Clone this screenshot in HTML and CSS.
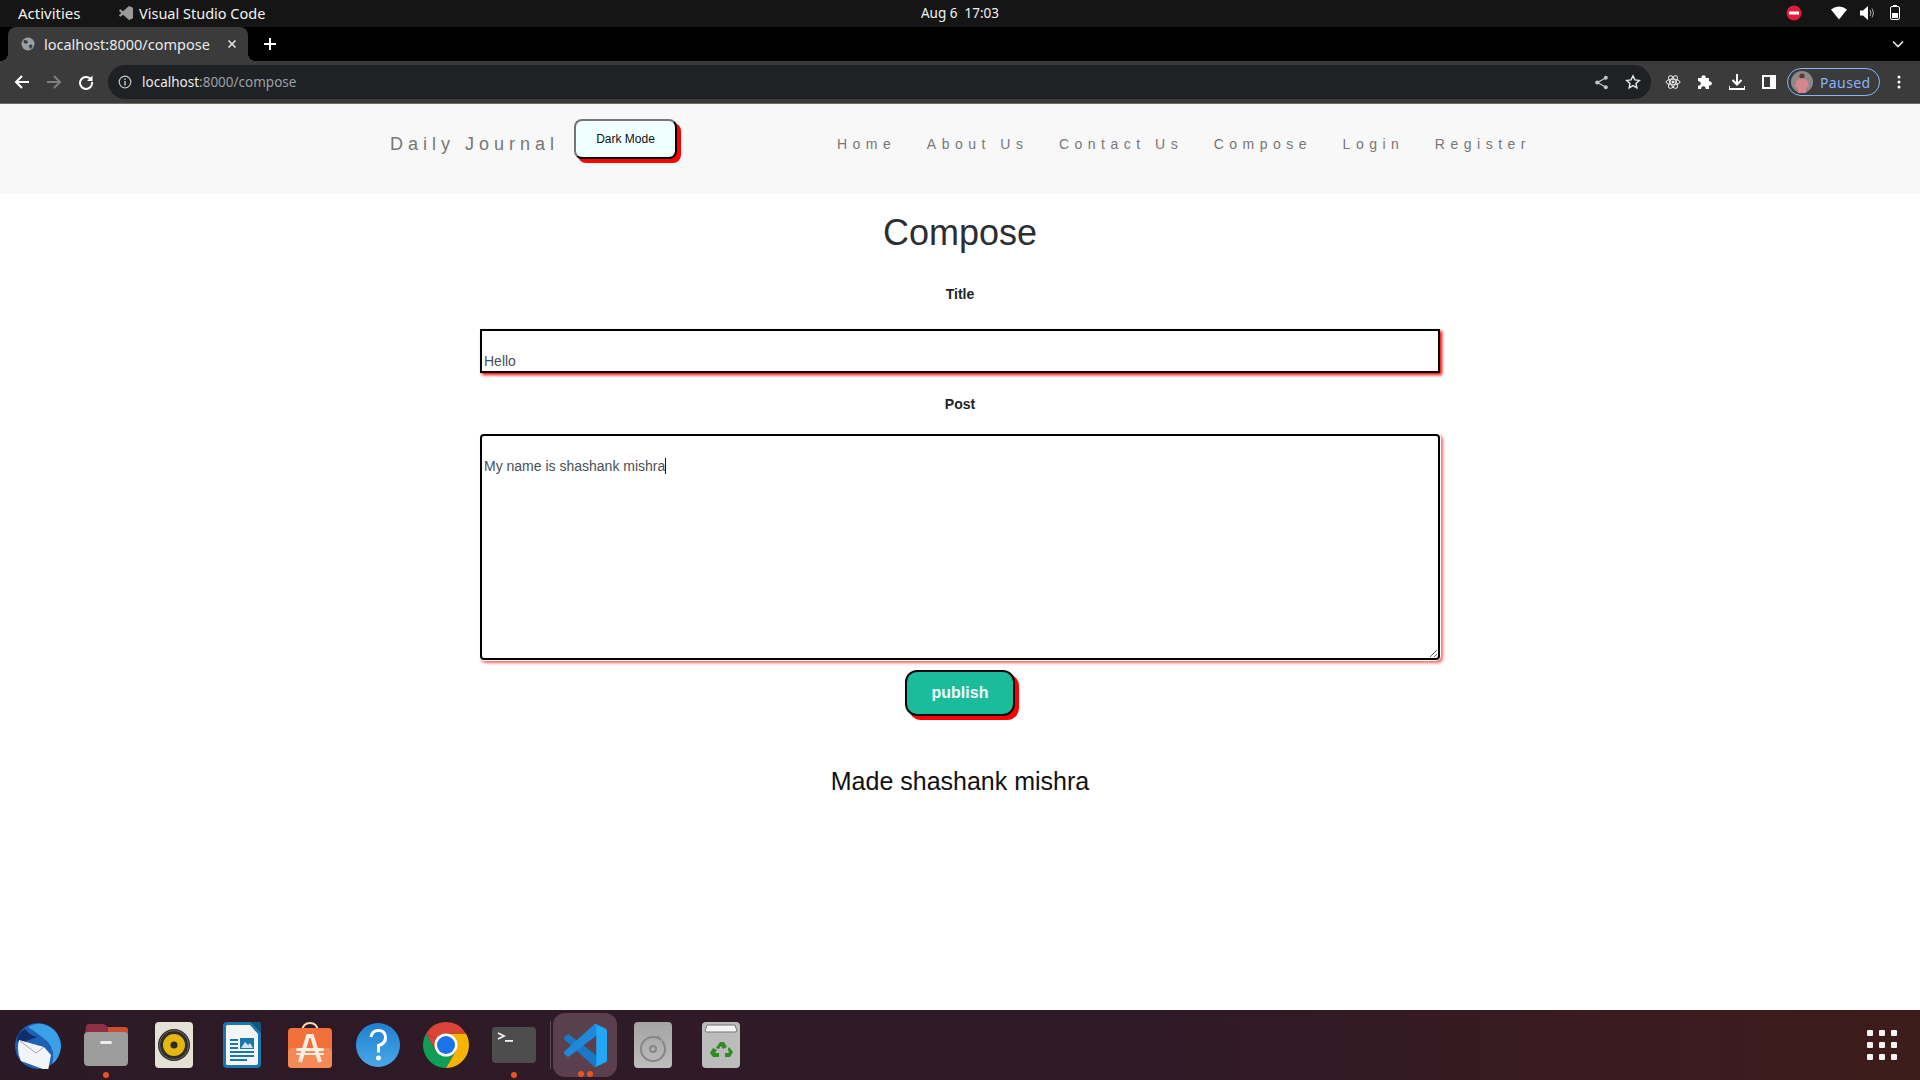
FILE: index.html
```html
<!DOCTYPE html>
<html lang="en">
<head>
  <meta charset="UTF-8" />
  <title>localhost:8000/compose</title>
  <link rel="stylesheet" href="styles.css">
</head>
<body>
<div class="desktop">

  <div class="topbar">
    <div class="top-left">
      <span class="activities">Activities</span>
      <span class="app-name">
        <svg width="14" height="14" viewBox="0 0 100 100"><path fill="#9a9a9a" d="M70.900 99.300a6.200 6.200 0 0 0 5-.2l20.600-9.900A6.250 6.250 0 0 0 100 83.600V16.400a6.250 6.250 0 0 0-3.500-5.600L75.900.9a6.230 6.230 0 0 0-7.100 1.200L29.350 38.100 12.100 25a4.170 4.170 0 0 0-5.320.24l-5.500 5a4.170 4.170 0 0 0 0 6.160L16.200 50 1.300 63.600a4.170 4.170 0 0 0 0 6.160l5.500 5a4.170 4.170 0 0 0 5.320.24L29.350 61.900l39.450 36a6.200 6.200 0 0 0 2.100 1.400zM75 27.300 45.100 50 75 72.700z"/></svg>
        Visual Studio Code
      </span>
    </div>
    <span class="clock">Aug 6&nbsp; 17:03</span>
    <div class="tray">
      <svg class="tray-dnd" width="16" height="16" viewBox="0 0 16 16"><circle cx="8" cy="8" r="7.500" fill="#e01b3c"/><rect x="3" y="6.500" width="10" height="3" fill="#fff"/></svg>
      <svg class="tray-wifi" width="16" height="14" viewBox="0 0 16 14"><path fill="#fff" d="M0 3.500Q8-2.500 16 3.500L8 13.500z"/></svg>
      <svg class="tray-sound" width="15" height="14" viewBox="0 0 15 14"><path fill="#fff" d="M0 4.500h3L8 0v14l-5-4.500H0z"/><path fill="none" stroke="#aaa" d="M10 4q2 3 0 6M12 2.500q3 4.500 0 9"/></svg>
      <svg class="tray-batt" width="10" height="15" viewBox="0 0 10 15"><rect x=".5" y="1.500" width="9" height="13" rx="1.500" fill="none" stroke="#fff"/><rect x="3" y="0" width="4" height="1.500" fill="#fff"/><rect x="2" y="8" width="6" height="5" fill="#fff"/></svg>
    </div>
  </div>

  <div class="tabstrip">
    <div class="tab">
      <svg width="14" height="14" viewBox="0 0 14 14"><circle cx="7" cy="7" r="6.500" fill="#9aa0a6"/><path fill="#3b3b3b" d="M3 3l3 .5 1 2-2 1.500-2.500-1.500zM8 8l3-.5.5 2-2 2.500-1-1z"/></svg>
      <span class="tab-title">localhost:8000/compose</span>
      <svg class="tab-close" width="10" height="10" viewBox="0 0 10 10"><path stroke="#e8eaed" stroke-width="1.500" d="M1.500 1.500l7 7M8.500 1.500l-7 7"/></svg>
    </div>
    <svg class="new-tab" width="14" height="14" viewBox="0 0 14 14"><path stroke="#fff" stroke-width="2" d="M7 1v12M1 7h12"/></svg>
    <svg class="tab-menu" width="12" height="8" viewBox="0 0 12 8"><path fill="none" stroke="#e8eaed" stroke-width="1.600" d="M1 1.500l5 5 5-5"/></svg>
  </div>

  <div class="toolbar">
    <div class="nav-btns">
      <svg width="16" height="16" viewBox="0 0 16 16"><path fill="none" stroke="#fff" stroke-width="2" d="M15 8H2M8 2L2 8l6 6"/></svg>
      <svg width="16" height="16" viewBox="0 0 16 16"><path fill="none" stroke="#7f7f7f" stroke-width="2" d="M1 8h13M8 2l6 6-6 6"/></svg>
      <svg width="16" height="16" viewBox="0 0 16 16"><path fill="none" stroke="#fff" stroke-width="2" d="M13 5.500A6 6 0 1 0 14 8"/><path fill="#fff" d="M14.500 1.500v5.500H9z"/></svg>
    </div>
    <div class="omnibox">
      <svg width="14" height="14" viewBox="0 0 14 14"><circle cx="7" cy="7" r="5.800" fill="none" stroke="#c4c7c9" stroke-width="1.200"/><rect x="6.300" y="6" width="1.400" height="4.500" fill="#c4c7c9"/><rect x="6.300" y="3.500" width="1.400" height="1.500" fill="#c4c7c9"/></svg>
      <span class="url"><b>localhost</b>:8000/compose</span>
      <span class="omni-right">
        <svg width="15" height="15" viewBox="0 0 15 15"><path fill="none" stroke="#c4c7c9" stroke-width="1.300" d="M11.500 3L3.500 7.500l8 4.500"/><circle cx="11.800" cy="2.800" r="2" fill="#c4c7c9"/><circle cx="3.200" cy="7.500" r="2" fill="#c4c7c9"/><circle cx="11.800" cy="12.200" r="2" fill="#c4c7c9"/></svg>
        <svg width="16" height="16" viewBox="0 0 16 16"><path fill="none" stroke="#e8eaed" stroke-width="1.400" d="M8 1.800l1.900 4.100 4.400.5-3.300 3 .9 4.400L8 11.600l-3.900 2.200.9-4.400-3.300-3 4.400-.5z"/></svg>
      </span>
    </div>
    <div class="tool-icons">
      <svg width="16" height="16" viewBox="0 0 16 16"><g fill="none" stroke="#e8eaed" stroke-width="1"><ellipse cx="8" cy="8" rx="7" ry="2.800"/><ellipse cx="8" cy="8" rx="7" ry="2.800" transform="rotate(60 8 8)"/><ellipse cx="8" cy="8" rx="7" ry="2.800" transform="rotate(120 8 8)"/></g><circle cx="8" cy="8" r="1.500" fill="#e8eaed"/></svg>
      <svg width="16" height="16" viewBox="0 0 16 16"><path fill="#fff" d="M1 4h3.500a2.200 2.200 0 1 1 4.200 0H12v3.300a2.200 2.200 0 1 1 0 4.200V15H8.500a2.200 2.200 0 1 0-4.200 0H1v-3.500a2.200 2.200 0 1 0 0-4.200z"/></svg>
      <svg width="16" height="16" viewBox="0 0 16 16"><path fill="none" stroke="#fff" stroke-width="2" d="M8 0v10M3.500 6L8 10.500 12.500 6M0 12v3h16v-3"/></svg>
      <svg class="side-panel" width="14" height="14" viewBox="0 0 14 14"><rect x="1" y="1" width="12" height="12" fill="none" stroke="#fff" stroke-width="2"/><rect x="8" y="1" width="5" height="12" fill="#fff"/></svg>
    </div>
    <div class="profile">
      <svg width="22" height="22" viewBox="0 0 22 22"><circle cx="11" cy="11" r="11" fill="#8d8986"/><circle cx="11" cy="5" r="2.600" fill="#5b3a36"/><path fill="#d9858c" d="M6 9l5-2 5 2 2 7-3 1v5H7v-5l-3-1z"/></svg>
      <span>Paused</span>
    </div>
    <svg class="kebab" width="4" height="14" viewBox="0 0 4 14"><circle cx="2" cy="2" r="1.500" fill="#fff"/><circle cx="2" cy="7" r="1.500" fill="#fff"/><circle cx="2" cy="12" r="1.500" fill="#fff"/></svg>
  </div>

  <div class="page">
    <nav class="navbar">
      <div class="nav-inner">
        <div class="brand-wrap">
          <a class="brand">Daily Journal</a>
          <button class="dark-btn">Dark Mode</button>
        </div>
        <ul class="nav-links">
          <li>Home</li>
          <li>About Us</li>
          <li>Contact Us</li>
          <li>Compose</li>
          <li>Login</li>
          <li>Register</li>
        </ul>
      </div>
    </nav>

    <main class="compose">
      <h1>Compose</h1>
      <label class="field-label" for="title">Title</label>
      <input class="title-input" id="title" type="text" value="Hello" />
      <label class="field-label post-label" for="post">Post</label>
      <div class="post-wrap">
        <textarea class="post-input" id="post">My name is shashank mishra</textarea>
        <span class="caret"></span>
      </div>
      <button class="publish">publish</button>
    </main>

    <footer class="made">Made shashank mishra</footer>
  </div>

  <div class="dock">
    <div class="dock-item">
      <svg width="48" height="48" viewBox="0 0 48 48"><circle cx="24" cy="25" r="23" fill="#1f5fb4"/><path fill="#3aa0e8" d="M14 6q10-6 20-1 12 6 13 20-1 12-9 18 4-12-4-22-8-7-20-15z"/><path fill="#0c2f6b" d="M3 20q0-8 8-12 4 6 12 8l-16 6zM10 40q14 8 26 4-14-2-26-4z"/><path fill="#f2f4f8" d="M5 19l25 7 7 8-3 16L7 40q-5-10-2-21z"/><path fill="none" stroke="#9aa6b8" d="M6 20l16 12 8-6"/></svg>
    </div>
    <div class="dock-item running">
      <svg width="46" height="44" viewBox="0 0 46 44"><path fill="#8f2f47" d="M3 4q0-3 3-3h15l4 3h17q3 0 3 3v12H1z"/><path fill="#d9562c" d="M25 4h17q3 0 3 3v10H25z" opacity=".8"/><rect x="1" y="9" width="44" height="34" rx="4" fill="#9c9c9c"/><rect x="17" y="18" width="12" height="3" rx="1.500" fill="#eee"/></svg>
    </div>
    <div class="dock-item">
      <svg width="38" height="46" viewBox="0 0 38 46"><rect width="38" height="46" rx="4" fill="#e6e1d6"/><circle cx="19" cy="23" r="16" fill="#2e2c29"/><circle cx="19" cy="23" r="14.500" fill="none" stroke="#6b6863"/><circle cx="19" cy="23" r="11" fill="#e5b60f"/><circle cx="19" cy="23" r="3.500" fill="#2b2a27"/></svg>
    </div>
    <div class="dock-item">
      <svg width="38" height="46" viewBox="0 0 38 46"><path fill="#1a77ab" d="M4 0h24l10 10v32q0 4-4 4H4q-4 0-4-4V4q0-4 4-4z"/><path fill="#f5f5f5" d="M4 3h23l8 9v29q0 2-2 2H4q-1 0-1-2V4z"/><path fill="#14567e" d="M28 0h8q2 0 2 2v9z"/><g fill="#1a77ab"><rect x="7" y="17" width="8" height="2"/><rect x="7" y="21" width="8" height="2"/><rect x="7" y="25" width="8" height="2"/><rect x="7" y="29" width="24" height="2"/><rect x="7" y="33" width="24" height="2"/><rect x="7" y="37" width="17" height="2"/><rect x="17" y="16" width="14" height="11"/></g><path fill="#cfe4f2" d="M18 26l4-6 3 3 2-2 3 5z"/></svg>
    </div>
    <div class="dock-item">
      <svg width="46" height="46" viewBox="0 0 46 46"><path fill="none" stroke="#f5d9b5" stroke-width="2" d="M15 9q1-8 8-8t8 8"/><rect y="6" width="44" height="40" x="1" rx="4" fill="#f2703a"/><rect y="26" width="44" height="20" x="1" rx="4" fill="#f58a55"/><path fill="none" stroke="#fbeee6" stroke-width="4" d="M13 40l8-26h4l8 26"/><rect x="9" y="26" width="28" height="3" rx="1.500" fill="#fbeee6"/><rect x="9" y="31" width="28" height="2" rx="1" fill="#fbeee6"/></svg>
    </div>
    <div class="dock-item">
      <svg width="46" height="46" viewBox="0 0 46 46"><defs><linearGradient id="helpbg" x1="0" y1="0" x2="0" y2="1"><stop offset="0" stop-color="#1d80d0"/><stop offset="1" stop-color="#4aa8e8"/></linearGradient></defs><circle cx="23" cy="23" r="22" fill="url(#helpbg)"/><path fill="none" stroke="#fff" stroke-width="3" d="M16 15q1-6.500 7.500-6.500t7 6.500-7 8.500v7"/><circle cx="23.500" cy="36" r="2.500" fill="#fff"/></svg>
    </div>
    <div class="dock-item">
      <svg width="48" height="48" viewBox="0 0 48 48"><path fill="#0f9d58" d="M4.100 12.500A23 23 0 0 0 24 47l10-17.300-20 .3z"/><path fill="#f4b400" d="M43.900 12.500A23 23 0 0 1 24 47l10-17.300V18l-10-5.500z"/><path fill="#db4437" d="M24 1a23 23 0 0 1 19.900 11.500H24L14 18l-9.900-5.500A23 23 0 0 1 24 1z"/><path fill="#db4437" d="M4.100 12.500L14 30l6-4-6-8z"/><circle cx="24" cy="24" r="11.500" fill="#fff"/><circle cx="24" cy="24" r="9" fill="#1a73e8"/></svg>
    </div>
    <div class="dock-item running">
      <svg width="44" height="36" viewBox="0 0 44 36"><rect width="44" height="36" rx="4" fill="#4d4d4d"/><path fill="none" stroke="#f0f0f0" stroke-width="1.800" d="M6 6l6 3-6 3"/><rect x="13" y="13" width="8" height="1.800" fill="#f0f0f0"/></svg>
    </div>
    <span class="dock-sep"></span>
    <div class="dock-item active">
      <svg width="43" height="43" viewBox="0 0 100 100"><path fill="#1a78c8" d="M96.460 89.200 75.860 99.100a6.230 6.230 0 0 1-7.100-1.200L1.300 36.400a4.170 4.170 0 0 1 0-6.160l5.500-5a4.170 4.170 0 0 1 5.320-.24l81.200 61.600a4.140 4.140 0 0 0 6.670-3.300v.7a6.250 6.250 0 0 1-3.540 5.600z"/><path fill="#1e88dc" d="M96.460 10.800 75.860.9a6.230 6.230 0 0 0-7.100 1.200L1.300 63.600a4.170 4.170 0 0 0 0 6.160l5.500 5a4.170 4.170 0 0 0 5.320.24l81.200-61.600a4.140 4.140 0 0 1 6.670 3.300v-.7a6.250 6.250 0 0 0-3.540-5.600z"/><path fill="#22a6f8" d="M75.860 99.100a6.200 6.200 0 0 1-7.100-1.200c2.300 2.300 6.240.67 6.240-2.600V4.700c0-3.270-3.940-4.900-6.240-2.600a6.200 6.200 0 0 1 7.100-1.200l20.600 9.900A6.250 6.250 0 0 1 100 16.400v67.200a6.250 6.250 0 0 1-3.540 5.600z"/></svg>
    </div>
    <div class="dock-item">
      <svg width="38" height="46" viewBox="0 0 38 46"><defs><linearGradient id="discbg" x1="0" y1="0" x2="0" y2="1"><stop offset="0" stop-color="#a4a4a4"/><stop offset="1" stop-color="#bdbdbd"/></linearGradient></defs><rect width="38" height="46" rx="4" fill="url(#discbg)"/><circle cx="19" cy="27" r="12" fill="none" stroke="#868686" stroke-width="2"/><circle cx="19" cy="27" r="3" fill="none" stroke="#868686" stroke-width="2"/><path fill="#a8a8a8" d="M21 13h7v8z"/><path fill="none" stroke="#868686" stroke-width="2" d="M23 14l4 4"/></svg>
    </div>
    <div class="dock-item">
      <svg width="38" height="46" viewBox="0 0 38 46"><rect width="38" height="46" rx="4" fill="#bcbcbc"/><path fill="#f4f4f4" stroke="#777" d="M5 3h28l2 6-2 1H4l-1-1z"/><g fill="#2f8b22"><path d="M14 26l4-6h4l3 5-4 2-2-3-2 3zM27 25l4 5-3 5h-5v-4h4l-1-4zM11 26l4 2-2 3h4v4h-6l-3-4z"/></g></svg>
    </div>
    <div class="apps-grid">
      <span></span><span></span><span></span><span></span><span></span><span></span><span></span><span></span><span></span>
    </div>
  </div>

</div>
</body>
</html>
```

FILE: styles.css
```css
* {
  box-sizing: border-box;
}
html, body {
  margin: 0;
  padding: 0;
}
body {
  font-family: "Liberation Sans", Arial, sans-serif;
  background: #fff;
}
svg {
  display: block;
  flex: none;
}
.desktop {
  width: 1920px;
  height: 1080px;
  display: flex;
  flex-direction: column;
  overflow: hidden;
}

/* ubuntu top bar */
.topbar {
  height: 27px;
  background: #151515;
  color: #f2f2f2;
  font-family: "Noto Sans", sans-serif;
  font-size: 14.500px;
  display: flex;
  align-items: center;
  justify-content: space-between;
  padding: 0 18px 2px;
}
.top-left {
  display: flex;
  align-items: center;
  width: 500px;
}
.activities {
  width: 100px;
  font-size: 15px;
}
.app-name {
  display: flex;
  align-items: center;
  gap: 6px;
  margin-left: 1px;
}
.clock {
  font-size: 13.500px;
}
.tray {
  width: 500px;
  position: relative;
  height: 25px;
}
.tray-dnd, .tray-wifi, .tray-sound, .tray-batt {
  position: absolute;
  top: 6px;
}
.tray-dnd { right: 100px; top: 5px; }
.tray-wifi { right: 55px; }
.tray-sound { right: 27px; }
.tray-batt { right: 2px; top: 5px; }

/* chrome tabs */
.tabstrip {
  height: 34px;
  background: #000;
  display: flex;
  align-items: center;
  padding-left: 8px;
  position: relative;
}
.tab {
  width: 240px;
  height: 34px;
  background: #3b3b3b;
  border-radius: 8px 8px 0 0;
  color: #e8eaed;
  font-family: "Noto Sans", sans-serif;
  font-size: 14.500px;
  display: flex;
  align-items: center;
  padding: 0 11px 1px 13px;
  position: relative;
}
.tab::before, .tab::after {
  content: "";
  position: absolute;
  bottom: 0;
  width: 8px;
  height: 8px;
}
.tab::before {
  left: -8px;
  background: radial-gradient(circle at 0 0, transparent 8px, #3b3b3b 8px);
}
.tab::after {
  right: -8px;
  background: radial-gradient(circle at 100% 0, transparent 8px, #3b3b3b 8px);
}
.tab-title {
  margin-left: 9px;
  flex: 1;
}
.new-tab {
  margin-left: 15px;
}
.tab-menu {
  position: absolute;
  right: 16px;
  top: 13px;
}

/* chrome toolbar */
.toolbar {
  height: 43px;
  background: #3b3b3b;
  border-bottom: 1px solid #6a6a6a;
  display: flex;
  align-items: center;
  padding-left: 14px;
}
.nav-btns {
  display: flex;
  gap: 16px;
  width: 94px;
}
.omnibox {
  width: 1543px;
  height: 34px;
  background: #202124;
  border-radius: 17px;
  display: flex;
  align-items: center;
  padding: 0 10px 0 10px;
  color: #9aa0a6;
  font-family: "Noto Sans", sans-serif;
  font-size: 13.500px;
}
.url {
  margin-left: 10px;
  flex: 1;
}
.url b {
  font-weight: 400;
  color: #e8eaed;
}
.omni-right {
  display: flex;
  align-items: center;
  gap: 16px;
}
.tool-icons {
  display: flex;
  align-items: center;
  gap: 16px;
  margin-left: 14px;
}
.side-panel {
  margin-left: 1px;
}
.profile {
  width: 93px;
  height: 28px;
  margin-left: 11px;
  border: 1px solid #8ab4f8;
  border-radius: 14px;
  display: flex;
  align-items: center;
  gap: 7px;
  padding-left: 3px;
  color: #8ab4f8;
  font-family: "Noto Sans", sans-serif;
  font-size: 14px;
  letter-spacing: .4px;
}
.kebab {
  margin-left: 17px;
}

/* the site itself */
.page {
  flex: 1;
  background: #fff;
}
.navbar {
  height: 90px;
  background: #f8f8f8;
}
.nav-inner {
  width: 1140px;
  margin: 0 auto;
  display: flex;
  justify-content: space-between;
}
.brand-wrap {
  display: flex;
  align-items: flex-start;
}
.brand {
  font-size: 18px;
  letter-spacing: 5px;
  color: #777;
  line-height: 20px;
  margin-top: 30px;
}
.dark-btn {
  width: 103px;
  height: 40px;
  margin: 15px 0 0 15px;
  background: #f0ffff;
  border: 2px outset #767676;
  border-color: #767676 #222 #222 #767676;
  border-radius: 8px;
  box-shadow: 4px 4px 0 #f00;
  font-family: "Liberation Sans", sans-serif;
  font-size: 12px;
  color: #111;
  padding: 0;
}
.nav-links {
  list-style: none;
  margin: 32px -1px 0 0;
  padding: 0;
  display: flex;
  gap: 30.500px;
  font-size: 14px;
  letter-spacing: 5.500px;
  line-height: 16px;
  color: #777;
}
.compose {
  width: 960px;
  margin: 0 auto;
  text-align: center;
}
h1 {
  font-size: 36px;
  font-weight: 400;
  line-height: 46px;
  color: #2b2f33;
  margin: 16px 0 30px;
}
.field-label {
  display: block;
  font-size: 14px;
  font-weight: 700;
  line-height: 16px;
  color: #212529;
  margin-bottom: 27px;
}
.post-label {
  margin-top: 23px;
  margin-bottom: 22px;
}
.title-input {
  display: block;
  width: 960px;
  height: 44px;
  border: 2px solid #000;
  box-shadow: 2px 2px 3px #f00;
  padding: 19px 2px 0;
  font-family: "Liberation Sans", sans-serif;
  font-size: 14px;
  color: #495057;
  border-radius: 0;
  outline: none;
}
.post-wrap {
  position: relative;
  height: 226px;
}
.post-input {
  display: block;
  width: 960px;
  height: 226px;
  border: 2px solid #000;
  border-radius: 4px;
  box-shadow: 0 0 0 1px #fff, 2px 2px 3px 1px #f66;
  padding: 22px 2px 0;
  font-family: "Liberation Sans", sans-serif;
  font-size: 14px;
  line-height: 16px;
  color: #495057;
  outline: none;
}
.caret {
  position: absolute;
  left: 185px;
  top: 24px;
  width: 1px;
  height: 16px;
  background: #111;
}
.publish {
  display: block;
  width: 110px;
  height: 46px;
  margin: 10px auto 0;
  background: #1abc9c;
  border: 2px solid #0a0a0a;
  border-radius: 12px;
  box-shadow: 4px 4px 0 #f00;
  color: #f2fffb;
  font-family: "Liberation Sans", sans-serif;
  font-size: 16px;
  font-weight: 700;
  padding: 0;
}
.made {
  text-align: center;
  font-size: 25px;
  line-height: 30px;
  color: #111;
  margin-top: 50px;
}

/* dock */
.dock {
  height: 70px;
  background: linear-gradient(90deg, #2b1a25 0%, #301a28 35%, #2f1a27 60%, #3a1b20 85%, #3d1c1a 100%);
  display: flex;
  align-items: center;
  padding-left: 4px;
  position: relative;
}
.dock-item {
  width: 68px;
  height: 64px;
  display: flex;
  align-items: center;
  justify-content: center;
  position: relative;
  border-radius: 12px;
}
.dock-item.running::after {
  content: "";
  position: absolute;
  left: 50%;
  margin-left: -3px;
  bottom: -1px;
  width: 6px;
  height: 6px;
  border-radius: 50%;
  background: #e95420;
}
.dock-item.active {
  width: 64px;
  margin: 0 2px;
  background: #5a404c;
}
.dock-item.active::before, .dock-item.active::after {
  content: "";
  position: absolute;
  bottom: 0;
  width: 6px;
  height: 6px;
  border-radius: 50%;
  background: #e95420;
}
.dock-item.active::before { left: 25px; }
.dock-item.active::after { left: 34px; }
.dock-sep {
  width: 1px;
  height: 48px;
  background: #5a4a55;
  margin-left: 2px;
}
.apps-grid {
  position: absolute;
  left: 1867px;
  top: 20px;
  display: grid;
  grid-template-columns: repeat(3, 6px);
  grid-auto-rows: 6px;
  gap: 6px;
}
.apps-grid span {
  background: #f2f2f2;
  border-radius: 1px;
}
```
